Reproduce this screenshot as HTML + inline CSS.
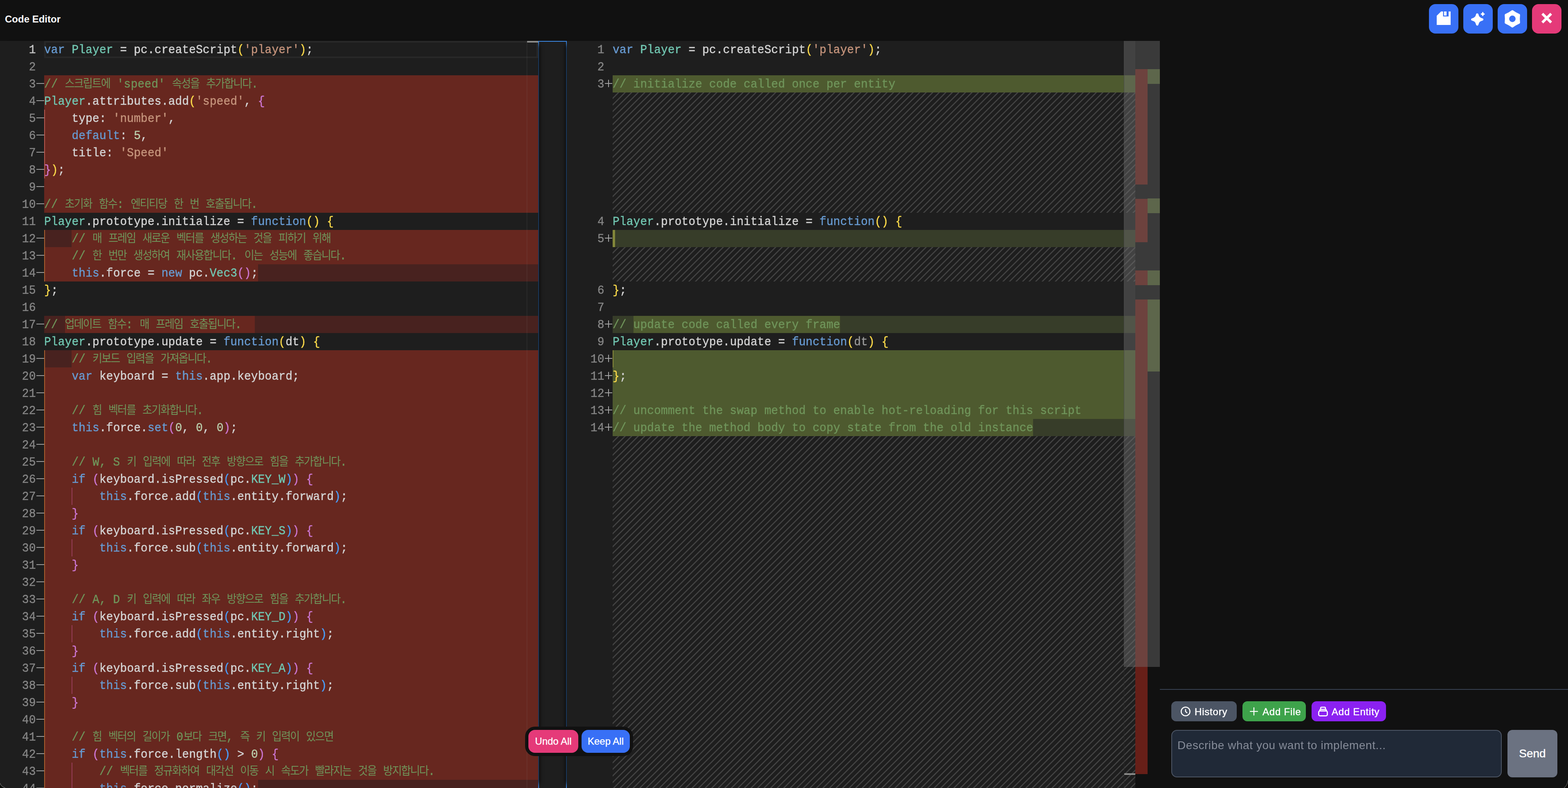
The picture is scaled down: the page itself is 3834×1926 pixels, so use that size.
<!DOCTYPE html><html><head><meta charset="utf-8"><title>Code Editor</title><style>

html,body{margin:0;padding:0;}
body{width:3834px;height:1926px;overflow:hidden;background:#111111;position:relative;font-family:"Liberation Sans",sans-serif;}
.abs{position:absolute;}
.ed{position:absolute;top:100px;height:1826px;background:#1e1e1e;overflow:hidden;}
.row{will-change:transform;-webkit-text-stroke:0.45px;position:absolute;left:0;height:42px;line-height:42px;white-space:pre;font-family:"Liberation Mono",monospace;font-size:28px;letter-spacing:0.057px;color:#d4d4d4;}
.row .t{position:relative;top:1.7px;display:inline-block;transform:scaleY(1.075);transform-origin:0 28.5px;}
.ln{will-change:transform;-webkit-text-stroke:0.45px;position:absolute;text-align:right;color:#858585;height:42px;line-height:42px;font-family:"Liberation Mono",monospace;font-size:28px;letter-spacing:0.057px;white-space:pre;}
.ln span{position:relative;top:1.7px;display:inline-block;transform:scaleY(1.075);transform-origin:0 28.5px;}
.ko{font-family:"Liberation Mono","Noto Sans CJK KR",monospace;font-size:26.2px;letter-spacing:-2px;-webkit-text-stroke:0;}
.kw{color:#679ad1}.ty{color:#71c6b1}.st{color:#c5947c}.cm{color:#6f945a}.nu{color:#bacdab}.b0{color:#f9d849}.b1{color:#cc76d1}.b2{color:#4a9df8}.dim{color:#989898}
.hatch{position:absolute;background-image:linear-gradient(-45deg,#414141 12.5%,rgba(0,0,0,0) 12.5%,rgba(0,0,0,0) 50%,#414141 50%,#414141 62.5%,rgba(0,0,0,0) 62.5%,rgba(0,0,0,0) 100%);background-size:16px 16px;}
.btn{position:absolute;top:10px;width:72px;height:72px;border-radius:16px;}
.pb{will-change:transform;-webkit-text-stroke:0.5px;position:absolute;top:1714px;height:49px;border-radius:12px;color:#fff;font-size:24px;line-height:49px;white-space:pre;}

</style></head><body>
<div class="abs" style="left:12px;top:0;height:94px;line-height:94px;font-size:24px;font-weight:bold;color:#fff;white-space:pre;">Code Editor</div>
<div class="btn" style="left:3494px;background:#3870f6"><svg width="72" height="72" viewBox="0 0 72 72"><path d="M29.7 18H53V51H19V28.4Z" fill="#fff"/><path d="M34.5 18h13.6v12.2h-13.6z" fill="#3870f6"/><path d="M36.9 18h6.1v10h-6.1z" fill="#fff"/></svg></div>
<div class="btn" style="left:3578px;background:#3870f6"><svg width="72" height="72" viewBox="0 0 72 72"><path d="M34.1 25.6Q35.9 35.8 46.1 37.6Q35.9 39.4 34.1 49.6Q32.3 39.4 22.1 37.6Q32.3 35.8 34.1 25.6Z" fill="#fff" stroke="#fff" stroke-width="6" stroke-linejoin="round"/><path d="M47.6 20.7Q47.8 24.1 51.2 24.3Q47.8 24.5 47.6 27.9Q47.4 24.5 44 24.3Q47.4 24.1 47.6 20.7Z" fill="#fff" stroke="#fff" stroke-width="2.8" stroke-linejoin="round"/></svg></div>
<div class="btn" style="left:3662px;background:#3870f6"><svg width="72" height="72" viewBox="0 0 72 72"><path d="M36.00 17.20Q43.57 22.89 52.28 26.60Q51.14 36.00 52.28 45.40Q43.57 49.11 36.00 54.80Q28.43 49.11 19.72 45.40Q20.86 36.00 19.72 26.60Q28.43 22.89 36.00 17.20Z" fill="#fff" stroke="#fff" stroke-width="5" stroke-linejoin="round"/><circle cx="36" cy="36" r="7.9" fill="#3870f6"/></svg></div>
<div class="btn" style="left:3746px;background:#e53a79"><svg width="72" height="72" viewBox="0 0 72 72"><path d="M25.2 23.4L46.8 45M46.8 23.4L25.2 45" stroke="#fff" stroke-width="6.3" fill="none"/></svg></div>
<div class="ed" style="left:0;width:1316px;box-shadow:12px 0 10px -10px #000;z-index:2">
<div style="position:absolute;left:108px;top:84px;width:1208px;height:42px;background:#67271f;"></div>
<div style="position:absolute;left:108px;top:126px;width:1208px;height:42px;background:#67271f;"></div>
<div style="position:absolute;left:108px;top:168px;width:1208px;height:42px;background:#67271f;"></div>
<div style="position:absolute;left:108px;top:210px;width:1208px;height:42px;background:#67271f;"></div>
<div style="position:absolute;left:108px;top:252px;width:1208px;height:42px;background:#67271f;"></div>
<div style="position:absolute;left:108px;top:294px;width:1208px;height:42px;background:#67271f;"></div>
<div style="position:absolute;left:108px;top:336px;width:1208px;height:42px;background:#67271f;"></div>
<div style="position:absolute;left:108px;top:378px;width:1208px;height:42px;background:#67271f;"></div>
<div style="position:absolute;left:108px;top:504px;width:1208px;height:42px;background:#67271f;"></div>
<div style="position:absolute;left:108px;top:798px;width:1208px;height:42px;background:#67271f;"></div>
<div style="position:absolute;left:108px;top:840px;width:1208px;height:42px;background:#67271f;"></div>
<div style="position:absolute;left:108px;top:882px;width:1208px;height:42px;background:#67271f;"></div>
<div style="position:absolute;left:108px;top:924px;width:1208px;height:42px;background:#67271f;"></div>
<div style="position:absolute;left:108px;top:966px;width:1208px;height:42px;background:#67271f;"></div>
<div style="position:absolute;left:108px;top:1008px;width:1208px;height:42px;background:#67271f;"></div>
<div style="position:absolute;left:108px;top:1050px;width:1208px;height:42px;background:#67271f;"></div>
<div style="position:absolute;left:108px;top:1092px;width:1208px;height:42px;background:#67271f;"></div>
<div style="position:absolute;left:108px;top:1134px;width:1208px;height:42px;background:#67271f;"></div>
<div style="position:absolute;left:108px;top:1176px;width:1208px;height:42px;background:#67271f;"></div>
<div style="position:absolute;left:108px;top:1218px;width:1208px;height:42px;background:#67271f;"></div>
<div style="position:absolute;left:108px;top:1260px;width:1208px;height:42px;background:#67271f;"></div>
<div style="position:absolute;left:108px;top:1302px;width:1208px;height:42px;background:#67271f;"></div>
<div style="position:absolute;left:108px;top:1344px;width:1208px;height:42px;background:#67271f;"></div>
<div style="position:absolute;left:108px;top:1386px;width:1208px;height:42px;background:#67271f;"></div>
<div style="position:absolute;left:108px;top:1428px;width:1208px;height:42px;background:#67271f;"></div>
<div style="position:absolute;left:108px;top:1470px;width:1208px;height:42px;background:#67271f;"></div>
<div style="position:absolute;left:108px;top:1512px;width:1208px;height:42px;background:#67271f;"></div>
<div style="position:absolute;left:108px;top:1554px;width:1208px;height:42px;background:#67271f;"></div>
<div style="position:absolute;left:108px;top:1596px;width:1208px;height:42px;background:#67271f;"></div>
<div style="position:absolute;left:108px;top:1638px;width:1208px;height:42px;background:#67271f;"></div>
<div style="position:absolute;left:108px;top:1680px;width:1208px;height:42px;background:#67271f;"></div>
<div style="position:absolute;left:108px;top:1722px;width:1208px;height:42px;background:#67271f;"></div>
<div style="position:absolute;left:108px;top:1764px;width:1208px;height:42px;background:#67271f;"></div>
<div style="position:absolute;left:108px;top:462px;width:1208px;height:42px;background:#48221f;"></div><div style="position:absolute;left:175.428px;top:462px;width:1140.57px;height:42px;background:#67271f;"></div>
<div style="position:absolute;left:108px;top:546px;width:1208px;height:42px;background:#48221f;"></div><div style="position:absolute;left:108px;top:546px;width:522.567px;height:42px;background:#67271f;"></div>
<div style="position:absolute;left:108px;top:672px;width:1208px;height:42px;background:#48221f;"></div><div style="position:absolute;left:158.571px;top:672px;width:464.142px;height:42px;background:#67271f;"></div>
<div style="position:absolute;left:108px;top:756px;width:1208px;height:42px;background:#48221f;"></div><div style="position:absolute;left:175.428px;top:756px;width:1140.57px;height:42px;background:#67271f;"></div>
<div style="position:absolute;left:108px;top:1806px;width:1208px;height:42px;background:#48221f;"></div><div style="position:absolute;left:108px;top:1806px;width:522.567px;height:42px;background:#67271f;"></div>
<div style="position:absolute;left:108px;top:0;width:1208px;height:42px;border:4px solid #282828;box-sizing:border-box"></div>
<div style="position:absolute;left:108px;top:168px;width:2px;height:168px;background:#b9584e;"></div>
<div style="position:absolute;left:108px;top:462px;width:2px;height:126px;background:#ab5f2e;"></div>
<div style="position:absolute;left:108px;top:756px;width:2px;height:1092px;background:#ab5f2e;"></div>
<div style="position:absolute;left:175px;top:1092px;width:2px;height:42px;background:#963c58;"></div>
<div style="position:absolute;left:175px;top:1218px;width:2px;height:42px;background:#963c58;"></div>
<div style="position:absolute;left:175px;top:1428px;width:2px;height:42px;background:#963c58;"></div>
<div style="position:absolute;left:175px;top:1554px;width:2px;height:42px;background:#963c58;"></div>
<div style="position:absolute;left:175px;top:1764px;width:2px;height:42px;background:#963c58;"></div>
<div style="position:absolute;left:175px;top:1806px;width:2px;height:42px;background:#963c58;"></div>
<div style="position:absolute;left:1288px;top:0px;width:1px;height:1826px;background:rgba(140,140,140,0.2);"></div>
<div style="position:absolute;left:1289px;top:0px;width:27px;height:4px;background:#8c8c8a;"></div>
<div class="ln" style="left:0;top:0px;width:87.5px;color:#c6c6c6"><span>1</span></div>
<div class="row" style="left:108px;top:0px"><span class="t"><span class="kw">var</span> <span class="ty">Player</span> = pc.createScript<span class="b0">(</span><span class="st">'player'</span><span class="b0">)</span>;</span></div>
<div class="ln" style="left:0;top:42px;width:87.5px"><span>2</span></div>
<div class="ln" style="left:0;top:84px;width:87.5px"><span>3</span></div>
<div style="position:absolute;left:89px;top:103px;width:19px;height:2px;background:#9c9c9c;"></div>
<div class="row" style="left:108px;top:84px"><span class="t"><span class="cm">// <span class="ko">스크립트에</span> 'speed' <span class="ko">속성을</span> <span class="ko">추가합니다</span>.</span></span></div>
<div class="ln" style="left:0;top:126px;width:87.5px"><span>4</span></div>
<div style="position:absolute;left:89px;top:145px;width:19px;height:2px;background:#9c9c9c;"></div>
<div class="row" style="left:108px;top:126px"><span class="t"><span class="ty">Player</span>.attributes.add<span class="b0">(</span><span class="st">'speed'</span>, <span class="b1">{</span></span></div>
<div class="ln" style="left:0;top:168px;width:87.5px"><span>5</span></div>
<div style="position:absolute;left:89px;top:187px;width:19px;height:2px;background:#9c9c9c;"></div>
<div class="row" style="left:108px;top:168px"><span class="t">    type: <span class="st">'number'</span>,</span></div>
<div class="ln" style="left:0;top:210px;width:87.5px"><span>6</span></div>
<div style="position:absolute;left:89px;top:229px;width:19px;height:2px;background:#9c9c9c;"></div>
<div class="row" style="left:108px;top:210px"><span class="t">    <span class="kw">default</span>: <span class="nu">5</span>,</span></div>
<div class="ln" style="left:0;top:252px;width:87.5px"><span>7</span></div>
<div style="position:absolute;left:89px;top:271px;width:19px;height:2px;background:#9c9c9c;"></div>
<div class="row" style="left:108px;top:252px"><span class="t">    title: <span class="st">'Speed'</span></span></div>
<div class="ln" style="left:0;top:294px;width:87.5px"><span>8</span></div>
<div style="position:absolute;left:89px;top:313px;width:19px;height:2px;background:#9c9c9c;"></div>
<div class="row" style="left:108px;top:294px"><span class="t"><span class="b1">}</span><span class="b0">)</span>;</span></div>
<div class="ln" style="left:0;top:336px;width:87.5px"><span>9</span></div>
<div style="position:absolute;left:89px;top:355px;width:19px;height:2px;background:#9c9c9c;"></div>
<div class="ln" style="left:0;top:378px;width:87.5px"><span>10</span></div>
<div style="position:absolute;left:89px;top:397px;width:19px;height:2px;background:#9c9c9c;"></div>
<div class="row" style="left:108px;top:378px"><span class="t"><span class="cm">// <span class="ko">초기화</span> <span class="ko">함수</span>: <span class="ko">엔티티당</span> <span class="ko">한</span> <span class="ko">번</span> <span class="ko">호출됩니다</span>.</span></span></div>
<div class="ln" style="left:0;top:420px;width:87.5px"><span>11</span></div>
<div class="row" style="left:108px;top:420px"><span class="t"><span class="ty">Player</span>.prototype.initialize = <span class="kw">function</span><span class="b0">(</span><span class="b0">)</span> <span class="b0">{</span></span></div>
<div class="ln" style="left:0;top:462px;width:87.5px"><span>12</span></div>
<div style="position:absolute;left:89px;top:481px;width:19px;height:2px;background:#9c9c9c;"></div>
<div class="row" style="left:108px;top:462px"><span class="t">    <span class="cm">// <span class="ko">매</span> <span class="ko">프레임</span> <span class="ko">새로운</span> <span class="ko">벡터를</span> <span class="ko">생성하는</span> <span class="ko">것을</span> <span class="ko">피하기</span> <span class="ko">위해</span></span></span></div>
<div class="ln" style="left:0;top:504px;width:87.5px"><span>13</span></div>
<div style="position:absolute;left:89px;top:523px;width:19px;height:2px;background:#9c9c9c;"></div>
<div class="row" style="left:108px;top:504px"><span class="t">    <span class="cm">// <span class="ko">한</span> <span class="ko">번만</span> <span class="ko">생성하여</span> <span class="ko">재사용합니다</span>. <span class="ko">이는</span> <span class="ko">성능에</span> <span class="ko">좋습니다</span>.</span></span></div>
<div class="ln" style="left:0;top:546px;width:87.5px"><span>14</span></div>
<div style="position:absolute;left:89px;top:565px;width:19px;height:2px;background:#9c9c9c;"></div>
<div class="row" style="left:108px;top:546px"><span class="t">    <span class="kw">this</span>.force = <span class="kw">new</span> pc.<span class="ty">Vec3</span><span class="b1">(</span><span class="b1">)</span>;</span></div>
<div class="ln" style="left:0;top:588px;width:87.5px"><span>15</span></div>
<div class="row" style="left:108px;top:588px"><span class="t"><span class="b0">}</span>;</span></div>
<div class="ln" style="left:0;top:630px;width:87.5px"><span>16</span></div>
<div class="ln" style="left:0;top:672px;width:87.5px"><span>17</span></div>
<div style="position:absolute;left:89px;top:691px;width:19px;height:2px;background:#9c9c9c;"></div>
<div class="row" style="left:108px;top:672px"><span class="t"><span class="cm">// <span class="ko">업데이트</span> <span class="ko">함수</span>: <span class="ko">매</span> <span class="ko">프레임</span> <span class="ko">호출됩니다</span>.</span></span></div>
<div class="ln" style="left:0;top:714px;width:87.5px"><span>18</span></div>
<div class="row" style="left:108px;top:714px"><span class="t"><span class="ty">Player</span>.prototype.update = <span class="kw">function</span><span class="b0">(</span>dt<span class="b0">)</span> <span class="b0">{</span></span></div>
<div class="ln" style="left:0;top:756px;width:87.5px"><span>19</span></div>
<div style="position:absolute;left:89px;top:775px;width:19px;height:2px;background:#9c9c9c;"></div>
<div class="row" style="left:108px;top:756px"><span class="t">    <span class="cm">// <span class="ko">키보드</span> <span class="ko">입력을</span> <span class="ko">가져옵니다</span>.</span></span></div>
<div class="ln" style="left:0;top:798px;width:87.5px"><span>20</span></div>
<div style="position:absolute;left:89px;top:817px;width:19px;height:2px;background:#9c9c9c;"></div>
<div class="row" style="left:108px;top:798px"><span class="t">    <span class="kw">var</span> keyboard = <span class="kw">this</span>.app.keyboard;</span></div>
<div class="ln" style="left:0;top:840px;width:87.5px"><span>21</span></div>
<div style="position:absolute;left:89px;top:859px;width:19px;height:2px;background:#9c9c9c;"></div>
<div class="ln" style="left:0;top:882px;width:87.5px"><span>22</span></div>
<div style="position:absolute;left:89px;top:901px;width:19px;height:2px;background:#9c9c9c;"></div>
<div class="row" style="left:108px;top:882px"><span class="t">    <span class="cm">// <span class="ko">힘</span> <span class="ko">벡터를</span> <span class="ko">초기화합니다</span>.</span></span></div>
<div class="ln" style="left:0;top:924px;width:87.5px"><span>23</span></div>
<div style="position:absolute;left:89px;top:943px;width:19px;height:2px;background:#9c9c9c;"></div>
<div class="row" style="left:108px;top:924px"><span class="t">    <span class="kw">this</span>.force.<span class="kw">set</span><span class="b1">(</span><span class="nu">0</span>, <span class="nu">0</span>, <span class="nu">0</span><span class="b1">)</span>;</span></div>
<div class="ln" style="left:0;top:966px;width:87.5px"><span>24</span></div>
<div style="position:absolute;left:89px;top:985px;width:19px;height:2px;background:#9c9c9c;"></div>
<div class="ln" style="left:0;top:1008px;width:87.5px"><span>25</span></div>
<div style="position:absolute;left:89px;top:1027px;width:19px;height:2px;background:#9c9c9c;"></div>
<div class="row" style="left:108px;top:1008px"><span class="t">    <span class="cm">// W, S <span class="ko">키</span> <span class="ko">입력에</span> <span class="ko">따라</span> <span class="ko">전후</span> <span class="ko">방향으로</span> <span class="ko">힘을</span> <span class="ko">추가합니다</span>.</span></span></div>
<div class="ln" style="left:0;top:1050px;width:87.5px"><span>26</span></div>
<div style="position:absolute;left:89px;top:1069px;width:19px;height:2px;background:#9c9c9c;"></div>
<div class="row" style="left:108px;top:1050px"><span class="t">    <span class="kw">if</span> <span class="b1">(</span>keyboard.isPressed<span class="b2">(</span>pc.<span class="ty">KEY_W</span><span class="b2">)</span><span class="b1">)</span> <span class="b1">{</span></span></div>
<div class="ln" style="left:0;top:1092px;width:87.5px"><span>27</span></div>
<div style="position:absolute;left:89px;top:1111px;width:19px;height:2px;background:#9c9c9c;"></div>
<div class="row" style="left:108px;top:1092px"><span class="t">        <span class="kw">this</span>.force.add<span class="b2">(</span><span class="kw">this</span>.entity.forward<span class="b2">)</span>;</span></div>
<div class="ln" style="left:0;top:1134px;width:87.5px"><span>28</span></div>
<div style="position:absolute;left:89px;top:1153px;width:19px;height:2px;background:#9c9c9c;"></div>
<div class="row" style="left:108px;top:1134px"><span class="t">    <span class="b1">}</span></span></div>
<div class="ln" style="left:0;top:1176px;width:87.5px"><span>29</span></div>
<div style="position:absolute;left:89px;top:1195px;width:19px;height:2px;background:#9c9c9c;"></div>
<div class="row" style="left:108px;top:1176px"><span class="t">    <span class="kw">if</span> <span class="b1">(</span>keyboard.isPressed<span class="b2">(</span>pc.<span class="ty">KEY_S</span><span class="b2">)</span><span class="b1">)</span> <span class="b1">{</span></span></div>
<div class="ln" style="left:0;top:1218px;width:87.5px"><span>30</span></div>
<div style="position:absolute;left:89px;top:1237px;width:19px;height:2px;background:#9c9c9c;"></div>
<div class="row" style="left:108px;top:1218px"><span class="t">        <span class="kw">this</span>.force.sub<span class="b2">(</span><span class="kw">this</span>.entity.forward<span class="b2">)</span>;</span></div>
<div class="ln" style="left:0;top:1260px;width:87.5px"><span>31</span></div>
<div style="position:absolute;left:89px;top:1279px;width:19px;height:2px;background:#9c9c9c;"></div>
<div class="row" style="left:108px;top:1260px"><span class="t">    <span class="b1">}</span></span></div>
<div class="ln" style="left:0;top:1302px;width:87.5px"><span>32</span></div>
<div style="position:absolute;left:89px;top:1321px;width:19px;height:2px;background:#9c9c9c;"></div>
<div class="ln" style="left:0;top:1344px;width:87.5px"><span>33</span></div>
<div style="position:absolute;left:89px;top:1363px;width:19px;height:2px;background:#9c9c9c;"></div>
<div class="row" style="left:108px;top:1344px"><span class="t">    <span class="cm">// A, D <span class="ko">키</span> <span class="ko">입력에</span> <span class="ko">따라</span> <span class="ko">좌우</span> <span class="ko">방향으로</span> <span class="ko">힘을</span> <span class="ko">추가합니다</span>.</span></span></div>
<div class="ln" style="left:0;top:1386px;width:87.5px"><span>34</span></div>
<div style="position:absolute;left:89px;top:1405px;width:19px;height:2px;background:#9c9c9c;"></div>
<div class="row" style="left:108px;top:1386px"><span class="t">    <span class="kw">if</span> <span class="b1">(</span>keyboard.isPressed<span class="b2">(</span>pc.<span class="ty">KEY_D</span><span class="b2">)</span><span class="b1">)</span> <span class="b1">{</span></span></div>
<div class="ln" style="left:0;top:1428px;width:87.5px"><span>35</span></div>
<div style="position:absolute;left:89px;top:1447px;width:19px;height:2px;background:#9c9c9c;"></div>
<div class="row" style="left:108px;top:1428px"><span class="t">        <span class="kw">this</span>.force.add<span class="b2">(</span><span class="kw">this</span>.entity.right<span class="b2">)</span>;</span></div>
<div class="ln" style="left:0;top:1470px;width:87.5px"><span>36</span></div>
<div style="position:absolute;left:89px;top:1489px;width:19px;height:2px;background:#9c9c9c;"></div>
<div class="row" style="left:108px;top:1470px"><span class="t">    <span class="b1">}</span></span></div>
<div class="ln" style="left:0;top:1512px;width:87.5px"><span>37</span></div>
<div style="position:absolute;left:89px;top:1531px;width:19px;height:2px;background:#9c9c9c;"></div>
<div class="row" style="left:108px;top:1512px"><span class="t">    <span class="kw">if</span> <span class="b1">(</span>keyboard.isPressed<span class="b2">(</span>pc.<span class="ty">KEY_A</span><span class="b2">)</span><span class="b1">)</span> <span class="b1">{</span></span></div>
<div class="ln" style="left:0;top:1554px;width:87.5px"><span>38</span></div>
<div style="position:absolute;left:89px;top:1573px;width:19px;height:2px;background:#9c9c9c;"></div>
<div class="row" style="left:108px;top:1554px"><span class="t">        <span class="kw">this</span>.force.sub<span class="b2">(</span><span class="kw">this</span>.entity.right<span class="b2">)</span>;</span></div>
<div class="ln" style="left:0;top:1596px;width:87.5px"><span>39</span></div>
<div style="position:absolute;left:89px;top:1615px;width:19px;height:2px;background:#9c9c9c;"></div>
<div class="row" style="left:108px;top:1596px"><span class="t">    <span class="b1">}</span></span></div>
<div class="ln" style="left:0;top:1638px;width:87.5px"><span>40</span></div>
<div style="position:absolute;left:89px;top:1657px;width:19px;height:2px;background:#9c9c9c;"></div>
<div class="ln" style="left:0;top:1680px;width:87.5px"><span>41</span></div>
<div style="position:absolute;left:89px;top:1699px;width:19px;height:2px;background:#9c9c9c;"></div>
<div class="row" style="left:108px;top:1680px"><span class="t">    <span class="cm">// <span class="ko">힘</span> <span class="ko">벡터의</span> <span class="ko">길이가</span> 0<span class="ko">보다</span> <span class="ko">크면</span>, <span class="ko">즉</span> <span class="ko">키</span> <span class="ko">입력이</span> <span class="ko">있으면</span></span></span></div>
<div class="ln" style="left:0;top:1722px;width:87.5px"><span>42</span></div>
<div style="position:absolute;left:89px;top:1741px;width:19px;height:2px;background:#9c9c9c;"></div>
<div class="row" style="left:108px;top:1722px"><span class="t">    <span class="kw">if</span> <span class="b1">(</span><span class="kw">this</span>.force.length<span class="b2">(</span><span class="b2">)</span> &gt; <span class="nu">0</span><span class="b1">)</span> <span class="b1">{</span></span></div>
<div class="ln" style="left:0;top:1764px;width:87.5px"><span>43</span></div>
<div style="position:absolute;left:89px;top:1783px;width:19px;height:2px;background:#9c9c9c;"></div>
<div class="row" style="left:108px;top:1764px"><span class="t">        <span class="cm">// <span class="ko">벡터를</span> <span class="ko">정규화하여</span> <span class="ko">대각선</span> <span class="ko">이동</span> <span class="ko">시</span> <span class="ko">속도가</span> <span class="ko">빨라지는</span> <span class="ko">것을</span> <span class="ko">방지합니다</span>.</span></span></div>
<div class="ln" style="left:0;top:1806px;width:87.5px"><span>44</span></div>
<div style="position:absolute;left:89px;top:1825px;width:19px;height:2px;background:#9c9c9c;"></div>
<div class="row" style="left:108px;top:1806px"><span class="t">        <span class="kw">this</span>.force.normalize<span class="b2">(</span><span class="b2">)</span>;</span></div>
</div>
<div class="abs" style="left:1316px;top:100px;width:70px;height:1826px;background:#1e1e1e;box-sizing:border-box;border:2px solid #3b86e0;border-bottom:none;z-index:1"></div>
<div class="ed" style="left:1386px;width:1390px;box-shadow:-12px 0 10px -10px #000;z-index:2">
<div style="position:absolute;left:112px;top:84px;width:1278px;height:42px;background:#4e5a2f;"></div>
<div style="position:absolute;left:112px;top:462px;width:1278px;height:42px;background:#373d29;"></div><div style="position:absolute;left:112px;top:462px;width:6px;height:42px;background:#4e5a2f;"></div>
<div style="position:absolute;left:112px;top:672px;width:1278px;height:42px;background:#373d29;"></div><div style="position:absolute;left:162.571px;top:672px;width:505.71px;height:42px;background:#4e5a2f;"></div>
<div style="position:absolute;left:112px;top:756px;width:1278px;height:42px;background:#4e5a2f;"></div>
<div style="position:absolute;left:112px;top:798px;width:1278px;height:42px;background:#4e5a2f;"></div>
<div style="position:absolute;left:112px;top:840px;width:1278px;height:42px;background:#4e5a2f;"></div>
<div style="position:absolute;left:112px;top:882px;width:1278px;height:42px;background:#4e5a2f;"></div>
<div style="position:absolute;left:112px;top:924px;width:1278px;height:42px;background:#373d29;"></div><div style="position:absolute;left:112px;top:924px;width:1028.28px;height:42px;background:#4e5a2f;"></div>
<div class="hatch" style="left:112px;top:126px;width:1278px;height:294px"></div>
<div class="hatch" style="left:112px;top:504px;width:1278px;height:84px"></div>
<div class="hatch" style="left:112px;top:966px;width:1278px;height:860px"></div>
<div style="position:absolute;left:112px;top:756px;width:2px;height:42px;background:#8a8a3a;"></div>
<div style="position:absolute;left:112px;top:462px;width:6px;height:42px;background:#82863a;"></div>
<div class="ln" style="left:0;top:0px;width:91.5px"><span>1</span></div>
<div class="row" style="left:112px;top:0px"><span class="t"><span class="kw">var</span> <span class="ty">Player</span> = pc.createScript<span class="b0">(</span><span class="st">'player'</span><span class="b0">)</span>;</span></div>
<div class="ln" style="left:0;top:42px;width:91.5px"><span>2</span></div>
<div class="ln" style="left:0;top:84px;width:91.5px"><span>3</span></div>
<div style="position:absolute;left:93px;top:103px;width:18px;height:2px;background:#a4a4a4;"></div>
<div style="position:absolute;left:101px;top:95px;width:2px;height:18px;background:#a4a4a4;"></div>
<div class="row" style="left:112px;top:84px"><span class="t"><span class="cm">// initialize code called once per entity</span></span></div>
<div class="ln" style="left:0;top:420px;width:91.5px"><span>4</span></div>
<div class="row" style="left:112px;top:420px"><span class="t"><span class="ty">Player</span>.prototype.initialize = <span class="kw">function</span><span class="b0">(</span><span class="b0">)</span> <span class="b0">{</span></span></div>
<div class="ln" style="left:0;top:462px;width:91.5px"><span>5</span></div>
<div style="position:absolute;left:93px;top:481px;width:18px;height:2px;background:#a4a4a4;"></div>
<div style="position:absolute;left:101px;top:473px;width:2px;height:18px;background:#a4a4a4;"></div>
<div class="ln" style="left:0;top:588px;width:91.5px"><span>6</span></div>
<div class="row" style="left:112px;top:588px"><span class="t"><span class="b0">}</span>;</span></div>
<div class="ln" style="left:0;top:630px;width:91.5px"><span>7</span></div>
<div class="ln" style="left:0;top:672px;width:91.5px"><span>8</span></div>
<div style="position:absolute;left:93px;top:691px;width:18px;height:2px;background:#a4a4a4;"></div>
<div style="position:absolute;left:101px;top:683px;width:2px;height:18px;background:#a4a4a4;"></div>
<div class="row" style="left:112px;top:672px"><span class="t"><span class="cm">// update code called every frame</span></span></div>
<div class="ln" style="left:0;top:714px;width:91.5px"><span>9</span></div>
<div class="row" style="left:112px;top:714px"><span class="t"><span class="ty">Player</span>.prototype.update = <span class="kw">function</span><span class="b0">(</span><span class="dim">dt</span><span class="b0">)</span> <span class="b0">{</span></span></div>
<div class="ln" style="left:0;top:756px;width:91.5px"><span>10</span></div>
<div style="position:absolute;left:93px;top:775px;width:18px;height:2px;background:#a4a4a4;"></div>
<div style="position:absolute;left:101px;top:767px;width:2px;height:18px;background:#a4a4a4;"></div>
<div class="ln" style="left:0;top:798px;width:91.5px"><span>11</span></div>
<div style="position:absolute;left:93px;top:817px;width:18px;height:2px;background:#a4a4a4;"></div>
<div style="position:absolute;left:101px;top:809px;width:2px;height:18px;background:#a4a4a4;"></div>
<div class="row" style="left:112px;top:798px"><span class="t"><span class="b0">}</span>;</span></div>
<div class="ln" style="left:0;top:840px;width:91.5px"><span>12</span></div>
<div style="position:absolute;left:93px;top:859px;width:18px;height:2px;background:#a4a4a4;"></div>
<div style="position:absolute;left:101px;top:851px;width:2px;height:18px;background:#a4a4a4;"></div>
<div class="ln" style="left:0;top:882px;width:91.5px"><span>13</span></div>
<div style="position:absolute;left:93px;top:901px;width:18px;height:2px;background:#a4a4a4;"></div>
<div style="position:absolute;left:101px;top:893px;width:2px;height:18px;background:#a4a4a4;"></div>
<div class="row" style="left:112px;top:882px"><span class="t"><span class="cm">// uncomment the swap method to enable hot-reloading for this script</span></span></div>
<div class="ln" style="left:0;top:924px;width:91.5px"><span>14</span></div>
<div style="position:absolute;left:93px;top:943px;width:18px;height:2px;background:#a4a4a4;"></div>
<div style="position:absolute;left:101px;top:935px;width:2px;height:18px;background:#a4a4a4;"></div>
<div class="row" style="left:112px;top:924px"><span class="t"><span class="cm">// update the method body to copy state from the old instance</span></span></div>
<div style="position:absolute;left:1362px;top:0px;width:1px;height:1826px;background:#2a2a2a;"></div>
<div style="position:absolute;left:1362px;top:0px;width:28px;height:1530px;background:rgba(121,121,121,0.4);"></div>
<div style="position:absolute;left:1363px;top:1790px;width:27px;height:4px;background:#8c8c8a;"></div>
</div>
<div class="abs" style="left:2776px;top:100px;width:60px;height:1826px;background:#111111;z-index:3">
<div style="position:absolute;left:0px;top:69px;width:30px;height:282px;background:#671f18;"></div>
<div style="position:absolute;left:0px;top:386px;width:30px;height:106px;background:#671f18;"></div>
<div style="position:absolute;left:0px;top:561px;width:30px;height:36px;background:#671f18;"></div>
<div style="position:absolute;left:0px;top:632px;width:30px;height:1160px;background:#671f18;"></div>
<div style="position:absolute;left:30px;top:69px;width:30px;height:36px;background:#4c5a2d;"></div>
<div style="position:absolute;left:30px;top:385px;width:30px;height:36px;background:#4c5a2d;"></div>
<div style="position:absolute;left:30px;top:561px;width:30px;height:36px;background:#4c5a2d;"></div>
<div style="position:absolute;left:30px;top:632px;width:30px;height:176px;background:#4c5a2d;"></div>
<div style="position:absolute;left:0px;top:0px;width:60px;height:1530px;background:rgba(121,121,121,0.4);"></div>
</div>
<div style="position:absolute;left:2836px;top:1684px;width:998px;height:2px;background:#384151;"></div>
<div class="pb" style="left:2864px;width:160px;background:#4c5564"><svg style="position:absolute;left:0;top:0" width="160" height="49" fill="none" stroke="#fff" stroke-width="2.5" stroke-linecap="round" stroke-linejoin="round"><circle cx="34.9" cy="24.9" r="10.7"/><path d="M34.9 20.3V24.9L38.2 28.2"/></svg><span style="position:absolute;left:57px;top:0.7px;letter-spacing:0.8px">History</span></div>
<div class="pb" style="left:3038px;width:155px;background:#3ea34b"><svg style="position:absolute;left:0;top:0" width="155" height="49" fill="none" stroke="#fff" stroke-width="2.3" stroke-linecap="round"><path d="M19.1 24.9H36.9M28 16V33.8"/></svg><span style="position:absolute;left:49px;top:0.7px;letter-spacing:0.8px">Add File</span></div>
<div class="pb" style="left:3207px;width:182px;background:#8b21f1"><svg style="position:absolute;left:0;top:0" width="182" height="49" fill="none" stroke="#fff" stroke-width="2.7" stroke-linecap="round" stroke-linejoin="round"><rect x="17.4" y="23.6" width="21.1" height="12" rx="3.2"/><path d="M20.1 23.6V22.2Q20.1 19.9 22.4 19.9H33.7Q36 19.9 36 22.2V23.6"/><path d="M22.2 19.9V16.8Q22.2 14.5 24.5 14.5H31.6Q33.9 14.5 33.9 16.8V19.9"/></svg><span style="position:absolute;left:49px;top:0.7px;letter-spacing:0.8px">Add Entity</span></div>
<div class="abs" style="left:2864px;top:1784px;width:808px;height:116px;box-sizing:border-box;border:2px solid #4c5564;border-radius:14px;background:#202937;color:#868c99;font-size:28px;white-space:pre;letter-spacing:0.55px"><span style="position:absolute;left:13px;top:20px;line-height:32px;will-change:transform">Describe what you want to implement...</span></div>
<div class="abs" style="left:3686px;top:1784px;width:122px;height:116px;border-radius:12px;background:#6b7281;color:#fff;font-size:28px;line-height:116px;text-align:center;-webkit-text-stroke:0.5px">Send</div>
<div class="abs" style="left:1284px;top:1776px;width:264px;height:72px;border-radius:24px;background:#111111;z-index:5">
<div class="abs" style="left:8px;top:8px;width:122px;height:56px;border-radius:16px;background:#e53a79;color:#fff;font-size:24px;line-height:56px;text-align:center;-webkit-text-stroke:0.4px">Undo All</div>
<div class="abs" style="left:138px;top:8px;width:118px;height:56px;border-radius:16px;background:#3870f6;color:#fff;font-size:24px;line-height:56px;text-align:center;-webkit-text-stroke:0.4px">Keep All</div>
</div>
<svg class="abs" style="left:0;top:1902px;z-index:9" width="24" height="24"><path d="M0 12Q2.5 20.5 13 24L0 24Z" fill="#070906"/><path d="M0 12Q2.5 20.5 13 24" fill="none" stroke="#5c5c5c" stroke-width="1.6"/></svg>
<svg class="abs" style="left:3810px;top:1902px;z-index:9" width="24" height="24"><path d="M24 5Q22.5 18 14 24L24 24Z" fill="#0a0806"/><path d="M24 5Q22.5 18 14 24" fill="none" stroke="#4c4c4c" stroke-width="1.6"/></svg>
</body></html>
